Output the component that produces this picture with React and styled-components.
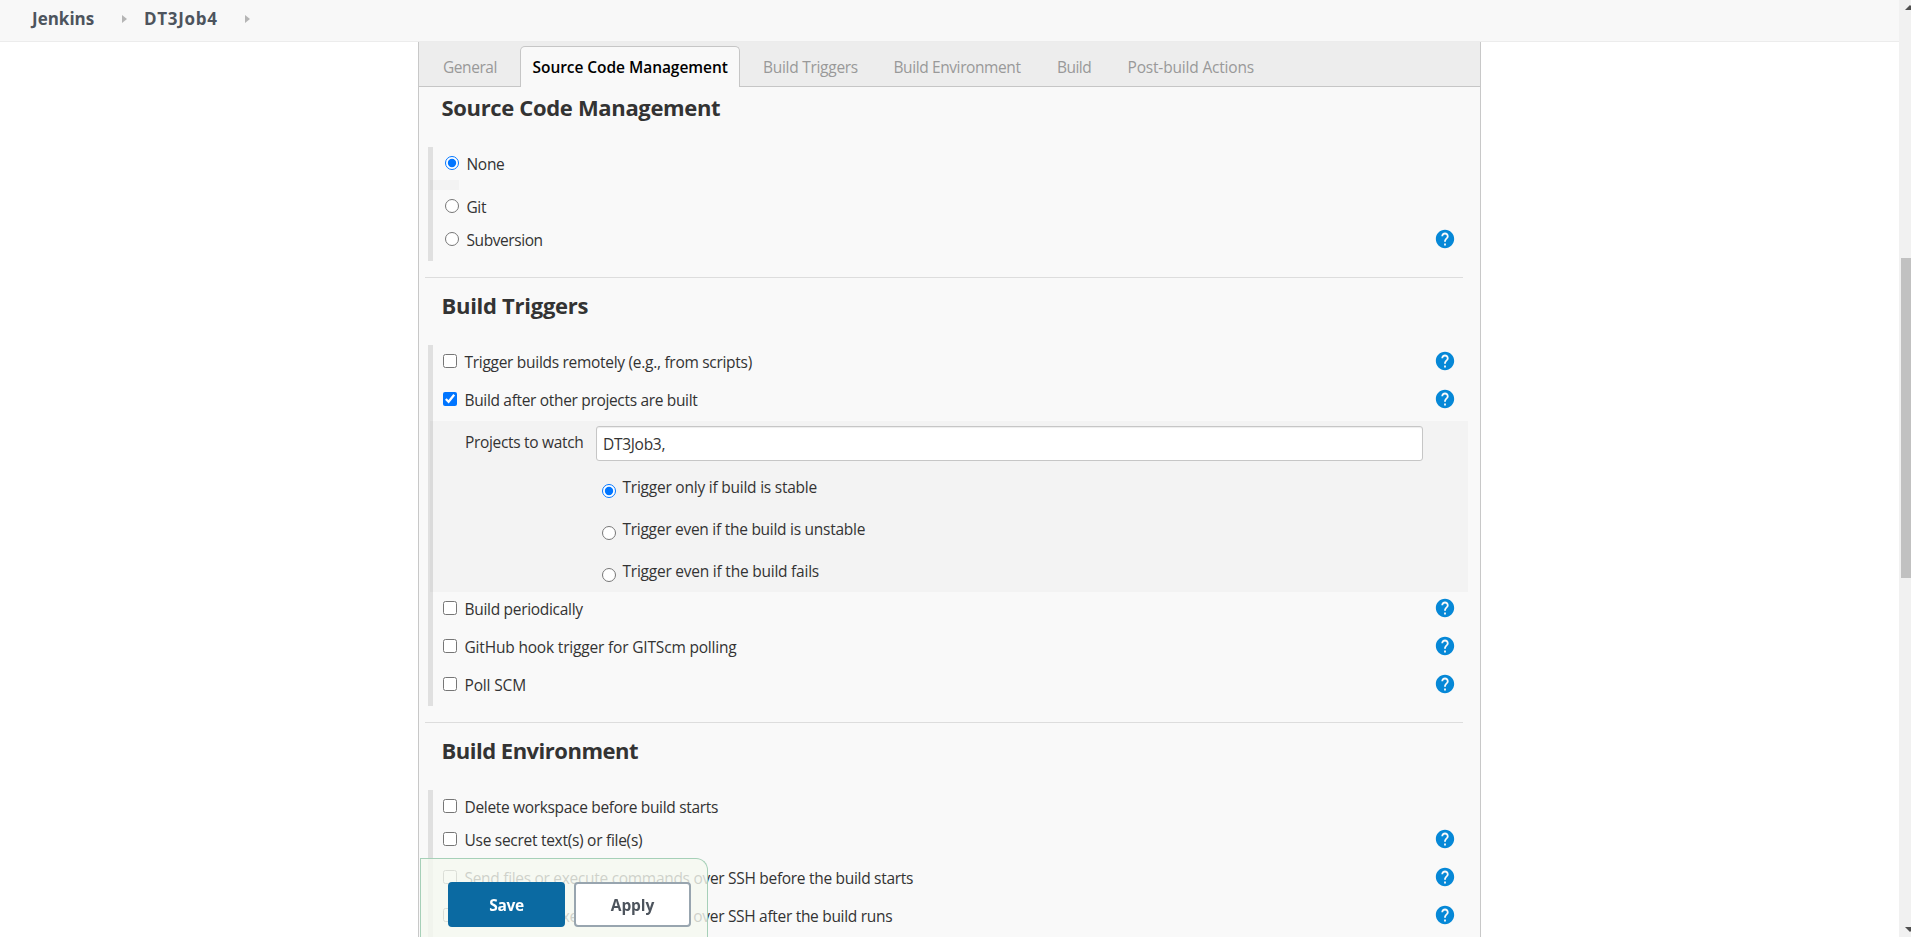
import React from "react";
import styled, { createGlobalStyle, css } from "styled-components";

const GlobalStyle = createGlobalStyle`
  *, *::before, *::after { box-sizing: border-box; }
  html, body { margin: 0; padding: 0; overflow: hidden; background: #fff; }
  body { font-family: "Open Sans", "Noto Sans", sans-serif; font-size: 15.5px; color: #333; }
`;

const Page = styled.div`
  display: grid;
  grid-template-columns: 1fr 12px;
  width: 1911px;
  height: 937px;
  overflow: hidden;
`;

const Main = styled.div`
  display: flex;
  flex-direction: column;
  min-width: 0;
  height: 937px;
  overflow: hidden;
`;

const Header = styled.header`
  display: flex;
  flex: none;
  align-items: center;
  height: 42px;
  padding: 0 0 4px 32px;
  background: #f8f8f8;
  border-bottom: 1px solid #ececec;
`;

const Crumb = styled.a`
  width: ${(p) => p.$width}px;
  font-size: 17px;
  font-weight: 700;
  line-height: 24px;
  letter-spacing: ${(p) => p.$spacing}px;
  color: #4d545d;
  white-space: nowrap;
`;

const CrumbArrow = styled.svg`
  display: block;
  width: 5px;
  height: 8px;
  margin: 0 ${(p) => p.$after}px 0 27px;
  fill: #b5b5b5;
`;

const Panel = styled.main`
  display: flex;
  flex: 1;
  flex-direction: column;
  width: 1063px;
  margin-left: 418px;
  background: #f9f9f9;
  border: solid #c8c8c8;
  border-width: 0 1px;
`;

const Tabs = styled.nav`
  display: flex;
  flex: none;
  align-items: flex-end;
  height: 45px;
  padding-left: 11px;
  margin-bottom: -8px;
  background: #ededed;
  box-shadow: inset 0 -1px #c6c6c6;
`;

const Tab = styled.a`
  flex: none;
  width: ${(p) => p.$width}px;
  height: 41px;
  padding: 9px 0 0 12px;
  border: 1px solid transparent;
  border-bottom: 0;
  line-height: 22px;
  letter-spacing: ${(p) => p.$spacing}px;
  color: #999;
  white-space: nowrap;
  ${(p) =>
    p.$active &&
    css`
      margin-right: 10px;
      padding-left: 11.5px;
      background: #f9f9f9;
      border-color: #c6c6c6;
      border-radius: 5px 5px 0 0;
      font-weight: 600;
      color: #000;
    `}
`;

const Section = styled.section`
  display: flex;
  flex: none;
  flex-direction: column;
  margin-bottom: 16px;
`;

const SectionTitle = styled.h2`
  height: 68px;
  margin: 0 17px 0 6px;
  padding: 12px 0 0 16.5px;
  border-top: 1px solid ${(p) => (p.$first ? "transparent" : "#ddd")};
  font-size: 22px;
  font-weight: 700;
  line-height: 30px;
  letter-spacing: ${(p) => p.$spacing}px;
  color: #333;
`;

const Rows = styled.div`
  display: flex;
  flex-direction: column;
  margin: 0 12px 0 9px;
  border-left: 5px solid #e0e0e0;
`;

const Row = styled.label`
  display: flex;
  align-items: flex-start;
  height: ${(p) => (p.$short ? 33 : 38)}px;
  padding: 9px 12px 0 ${(p) => (p.$radio ? 12 : 10)}px;
`;

const RowText = styled.span`
  flex: 1;
  margin: -2px 0 0 7.5px;
  line-height: 20px;
  letter-spacing: ${(p) => p.$spacing}px;
  white-space: nowrap;
`;

const Mark = styled.input`
  flex: none;
  width: 14px;
  height: 14px;
  margin: 0;
  accent-color: #0075ff;
`;

const Help = styled.svg`
  flex: none;
  width: 22px;
  height: 22px;
  margin-top: -4px;
  fill: #0688d7;
`;

const Strip = styled.div`
  width: 29px;
  height: 10px;
  margin-left: -3px;
  background: rgba(0, 0, 0, 0.025);
`;

const Nested = styled.div`
  display: grid;
  grid-template-columns: 131px 827px;
  align-content: start;
  height: 171px;
  margin-left: -3px;
  padding: 5px 0 0 35px;
  background: rgba(0, 0, 0, 0.025);
`;

const FieldLabel = styled.span`
  padding-top: 6px;
  line-height: 20px;
  letter-spacing: ${(p) => p.$spacing}px;
`;

const Field = styled.input`
  width: 827px;
  height: 35px;
  padding: 0 6px;
  border: 1px solid #c6c6c6;
  border-radius: 3px;
  background: #fff;
  box-shadow: inset 0 1px 1px rgba(0, 0, 0, 0.075);
  font: inherit;
  letter-spacing: -0.3px;
  color: #333;
  outline: none;
`;

const Options = styled.div`
  display: flex;
  grid-column: 2;
  flex-direction: column;
  padding: 17px 0 0 6px;
`;

const Option = styled.label`
  display: flex;
  align-items: flex-start;
  height: 42px;
`;

const OptionMark = styled(Mark)`
  margin-top: 6px;
`;

const OptionText = styled(RowText)`
  margin: -1px 0 0 6.5px;
`;

const SaveBar = styled.div`
  position: fixed;
  left: 420px;
  bottom: 0;
  display: flex;
  gap: 9px;
  width: 288px;
  height: 79px;
  padding: 23px 0 0 27px;
  background: rgba(245, 249, 240, 0.8);
  border: 1px solid #a6d0b8;
  border-bottom: 0;
  border-radius: 0 12px 0 0;
`;

const Button = styled.button`
  width: 117px;
  height: 45px;
  padding: 0;
  border: 2px solid ${(p) => (p.$primary ? "#0b6aa2" : "#98a5af")};
  border-radius: 4px;
  background: ${(p) => (p.$primary ? "#0b6aa2" : "#fff")};
  font: 700 15.5px "Open Sans", "Noto Sans", sans-serif;
  letter-spacing: ${(p) => p.$spacing}px;
  color: ${(p) => (p.$primary ? "#fff" : "#4d545d")};
`;

const ScrollTrack = styled.div`
  display: flex;
  flex-direction: column;
  align-items: flex-start;
  height: 937px;
  padding: 5px 0 5px 6px;
  background: #f1f1f1;
`;

const ScrollArrow = styled.svg`
  display: block;
  flex: none;
  width: 6px;
  height: 5px;
  fill: #505050;
`;

const ScrollThumb = styled.div`
  flex: none;
  width: 10px;
  height: 320px;
  margin: 248px 0 auto -4px;
  background: #c1c1c1;
`;

const HELP_PATH =
  "M12 2C6.48 2 2 6.48 2 12s4.48 10 10 10 10-4.48 10-10S17.52 2 12 2zm1 17h-2v-2h2v2zm2.07-7.75l-.9.92C13.45 12.9 13 13.5 13 15h-2v-.5c0-1.1.45-2.1 1.17-2.83l1.24-1.26c.37-.36.59-.86.59-1.41 0-1.1-.9-2-2-2s-2 .9-2 2H8c0-2.21 1.79-4 4-4s4 1.79 4 4c0 .88-.36 1.68-.93 2.25z";

const tabs = [
  { text: "General", width: 90, spacing: -0.45 },
  { text: "Source Code Management", width: 220, spacing: -0.05, active: true },
  { text: "Build Triggers", width: 130.5, spacing: -0.28 },
  { text: "Build Environment", width: 163.5, spacing: -0.4 },
  { text: "Build", width: 70.5, spacing: -0.55 },
  { text: "Post-build Actions", width: 160, spacing: -0.18 },
];

function OptionRow({ text, spacing = -0.3, type = "checkbox", name, checked, short, help }) {
  return (
    <Row $short={short} $radio={type === "radio"}>
      <Mark type={type} name={name} defaultChecked={checked} />
      <RowText $spacing={spacing}>{text}</RowText>
      {help && (
        <Help viewBox="0 0 24 24">
          <path d={HELP_PATH} />
        </Help>
      )}
    </Row>
  );
}

function TriggerOption({ text, spacing, checked }) {
  return (
    <Option>
      <OptionMark type="radio" name="threshold" defaultChecked={checked} />
      <OptionText $spacing={spacing}>{text}</OptionText>
    </Option>
  );
}

export default function App() {
  return (
    <Page>
      <GlobalStyle />
      <Main>
        <Header>
          <Crumb $width={63} $spacing={0}>Jenkins</Crumb>
          <CrumbArrow $after={17} viewBox="0 0 5 8"><path d="M0 0l5 4-5 4z" /></CrumbArrow>
          <Crumb $width={74} $spacing={0.7}>DT3Job4</Crumb>
          <CrumbArrow $after={0} viewBox="0 0 5 8"><path d="M0 0l5 4-5 4z" /></CrumbArrow>
        </Header>
        <Panel>
          <Tabs>
            {tabs.map((t) => (
              <Tab key={t.text} $width={t.width} $spacing={t.spacing} $active={t.active}>
                {t.text}
              </Tab>
            ))}
          </Tabs>

          <Section>
            <SectionTitle $first $spacing={-0.34}>Source Code Management</SectionTitle>
            <Rows>
              <OptionRow text="None" type="radio" name="scm" spacing={-0.3} checked short />
              <Strip />
              <OptionRow text="Git" type="radio" name="scm" spacing={-0.4} short />
              <OptionRow text="Subversion" type="radio" name="scm" spacing={-0.43} help />
            </Rows>
          </Section>

          <Section>
            <SectionTitle $spacing={-0.28}>Build Triggers</SectionTitle>
            <Rows>
              <OptionRow text="Trigger builds remotely (e.g., from scripts)" spacing={-0.29} help />
              <OptionRow text="Build after other projects are built" spacing={-0.33} checked help />
              <Nested>
                <FieldLabel $spacing={-0.32}>Projects to watch</FieldLabel>
                <Field defaultValue="DT3Job3," />
                <Options>
                  <TriggerOption text="Trigger only if build is stable" spacing={-0.23} checked />
                  <TriggerOption text="Trigger even if the build is unstable" spacing={-0.27} />
                  <TriggerOption text="Trigger even if the build fails" spacing={-0.23} />
                </Options>
              </Nested>
              <OptionRow text="Build periodically" spacing={-0.3} help />
              <OptionRow text="GitHub hook trigger for GITScm polling" spacing={-0.18} help />
              <OptionRow text="Poll SCM" spacing={-0.15} help />
            </Rows>
          </Section>

          <Section>
            <SectionTitle $spacing={-0.5}>Build Environment</SectionTitle>
            <Rows>
              <OptionRow text="Delete workspace before build starts" spacing={-0.325} short />
              <OptionRow text="Use secret text(s) or file(s)" spacing={-0.28} help />
              <OptionRow text="Send files or execute commands over SSH before the build starts" help />
              <OptionRow text="Send files or execute commands over SSH after the build runs" spacing={-0.305} help />
            </Rows>
          </Section>
        </Panel>
      </Main>
      <ScrollTrack>
        <ScrollArrow viewBox="0 0 6 5"><path d="M0 5l5-5 1 1v4z" /></ScrollArrow>
        <ScrollThumb />
        <ScrollArrow viewBox="0 0 6 5"><path d="M0 0h6v4l-1 1z" /></ScrollArrow>
      </ScrollTrack>
      <SaveBar>
        <Button $primary $spacing={-0.4}>Save</Button>
        <Button $spacing={-0.1}>Apply</Button>
      </SaveBar>
    </Page>
  );
}
